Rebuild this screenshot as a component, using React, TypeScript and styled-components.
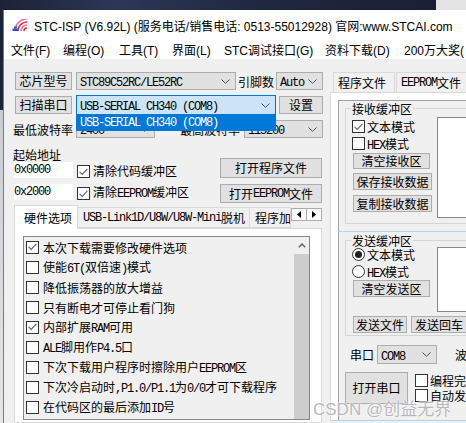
import React from 'react';
import styled, { createGlobalStyle } from 'styled-components';

const GlobalStyle = createGlobalStyle`
  html, body { margin: 0; padding: 0; }
  body {
    width: 466px;
    height: 423px;
    overflow: hidden;
    background: #d9d9d9;
    font-family: "Noto Sans CJK SC", sans-serif;
    font-size: 12px;
    color: #000;
  }
`;

// sim-sun like latin runs: narrow mono
const Lat = styled.span`
    font-family: "Liberation Mono", monospace;
    letter-spacing: -1.2px;
`;

const isLat = (s: string) => /^[\x20-\x7e]+$/.test(s);

function T({ children }: { children: string }) {
    const parts = children.split(/([\x20-\x7e]+)/).filter(Boolean);
    return <>{parts.map((p, i) => isLat(p) ? <Lat key={i}>{p}</Lat> : <span key={i}>{p}</span>)}</>;
}

const Page = styled.div`
    position: relative;
    width: 466px;
    height: 423px;
    overflow: hidden;
    display: flex;
    flex-direction: column;
`;

const Desktop = styled.div`
    height: 10px;
    flex: none;
    background: linear-gradient(to right, #1c2236 0, #2c3656 25%, #202840 55%, #1a2033 93.5%, #e4e4e4 93.5%);
`;

const Screen = styled.div`
    display: flex;
    flex: 1;
    min-height: 0;
`;

const Edge = styled.div`
    width: 3px;
    flex: none;
    background: linear-gradient(#1e2438 0, #1e2438 100px, #c9ccd2 100px, #e6e6e6 100%);
`;

const Window = styled.div`
    flex: 1;
    min-width: 0;
    display: flex;
    flex-direction: column;
    border-left: 1px solid #7b7b7b;
    background: #f0f0f0;
`;

const TitleBar = styled.div`
    height: 30px;
    flex: none;
    background: #fff;
    display: flex;
    align-items: center;
    gap: 6px;
    padding-left: 8px;
    font-family: "Liberation Sans", "Noto Sans CJK SC", sans-serif;
    font-size: 12px;
    white-space: nowrap;
`;

const MenuBar = styled.div`
    height: 19px;
    flex: none;
    box-sizing: border-box;
    padding: 4px 0 0 7px;
    background: #fff;
    display: flex;
    font-family: "Liberation Sans", "Noto Sans CJK SC", sans-serif;
    font-size: 12px;
    line-height: 15px;
    white-space: nowrap;
`;

const MenuItem = styled.span<{ $w?: number }>`
    flex: none;
    width: ${p => (p.$w ? `${p.$w}px` : 'auto')};
`;

const Body = styled.div`
    flex: 1;
    min-height: 0;
    display: flex;
`;

/* ---------- left side ---------- */

const LeftPane = styled.div`
    width: 326px;
    flex: none;
    box-sizing: border-box;
    padding: 13px 0 0 10px;
    display: flex;
    flex-direction: column;
`;

const Row = styled.div<{ $h: number; $mt?: number }>`
    display: flex;
    align-items: center;
    height: ${p => p.$h}px;
    margin-top: ${p => p.$mt ?? 0}px;
    flex: none;
`;

const Button = styled.div<{ $w: number; $h: number; $ml?: number }>`
    width: ${p => p.$w}px;
    height: ${p => p.$h}px;
    margin-left: ${p => p.$ml ?? 0}px;
    flex: none;
    box-sizing: border-box;
    border: 1px solid #adadad;
    background: #e1e1e1;
    display: flex;
    align-items: center;
    justify-content: center;
    white-space: nowrap;
    line-height: 1;
`;

const Label = styled.span<{ $w?: number; $ml?: number }>`
    width: ${p => (p.$w ? `${p.$w}px` : 'auto')};
    margin-left: ${p => p.$ml ?? 0}px;
    flex: none;
    white-space: nowrap;
`;

const ComboBox = styled.div<{ $w: number; $h: number; $ml?: number; $focus?: boolean }>`
    position: relative;
    width: ${p => p.$w}px;
    height: ${p => p.$h}px;
    margin-left: ${p => p.$ml ?? 0}px;
    flex: none;
    box-sizing: border-box;
    border: 1px solid ${p => (p.$focus ? '#0078d7' : '#adadad')};
    background: ${p => (p.$focus ? '#cce4f7' : '#e1e1e1')};
    display: flex;
    align-items: center;
    justify-content: space-between;
    padding: 0 5px 0 3px;
    white-space: nowrap;
`;

const DropList = styled.div`
    position: absolute;
    left: -1px;
    right: -1px;
    top: 100%;
    height: 17px;
    background: #0078d7;
    color: #fff;
    display: flex;
    align-items: center;
    padding-left: 4px;
    z-index: 5;
`;

const Chevron = () => (
    <svg width="9" height="5" viewBox="0 0 9 5">
        <polyline points="0.5,0.5 4.5,4.3 8.5,0.5" fill="none" stroke="#505050" strokeWidth="1" />
    </svg>
);

function Combo({ w, h, ml, text, focus, drop }: { w: number; h: number; ml?: number; text: string; focus?: boolean; drop?: string }) {
    return (
        <ComboBox $w={w} $h={h} $ml={ml} $focus={focus}>
            <span><T>{text}</T></span>
            <Chevron />
            {drop && <DropList><T>{drop}</T></DropList>}
        </ComboBox>
    );
}

const BoxMark = styled.span<{ $round?: boolean }>`
    width: 13px;
    height: 13px;
    flex: none;
    box-sizing: border-box;
    border: 1px solid #333;
    border-radius: ${p => (p.$round ? '50%' : '0')};
    background: #fff;
    display: inline-flex;
    align-items: center;
    justify-content: center;
`;

const Dot = styled.span`
    width: 7px;
    height: 7px;
    border-radius: 50%;
    background: #222;
`;

function Check({ on }: { on?: boolean }) {
    return (
        <BoxMark>
            {on && (
                <svg width="9" height="8" viewBox="0 0 9 8">
                    <polyline points="0.6,3.8 3.2,6.4 8.4,0.9" fill="none" stroke="#666" strokeWidth="1.2" />
                </svg>
            )}
        </BoxMark>
    );
}

function Radio({ on }: { on?: boolean }) {
    return <BoxMark $round>{on && <Dot />}</BoxMark>;
}

const AddrBlock = styled.div`
    display: flex;
    margin-top: 9px;
    flex: none;
`;

const AddrLeft = styled.div`
    width: 206px;
    display: flex;
    flex-direction: column;
`;

const AddrRight = styled.div`
    display: flex;
    flex-direction: column;
    padding-top: 11px;
    gap: 6px;
`;

const AddrLabel = styled.div`
    height: 15px;
    line-height: 15px;
    margin-left: -1px;
`;

const AddrInput = styled.div`
    width: 59px;
    height: 16px;
    flex: none;
    background: #fff;
    display: flex;
    align-items: center;
`;

const CheckText = styled.span<{ $ml?: number }>`
    margin-left: ${p => p.$ml ?? 3}px;
    white-space: nowrap;
`;

const TabStrip = styled.div`
    display: flex;
    align-items: flex-end;
    height: 23px;
    margin-top: 2px;
    flex: none;
    position: relative;
    z-index: 1;
`;

const Tab = styled.div<{ $w: number; $active?: boolean }>`
    width: ${p => p.$w}px;
    height: ${p => (p.$active ? 24 : 21)}px;
    margin-bottom: ${p => (p.$active ? -1 : 0)}px;
    margin-right: -1px;
    flex: none;
    box-sizing: border-box;
    border: 1px solid #d9d9d9;
    border-bottom: ${p => (p.$active ? 'none' : '1px solid #d9d9d9')};
    background: ${p => (p.$active ? '#fff' : '#f0f0f0')};
    display: flex;
    align-items: center;
    padding-left: ${p => (p.$active ? 9 : 5)}px;
    padding-bottom: ${p => (p.$active ? 1 : 0)}px;
    overflow: hidden;
    white-space: nowrap;
`;

const TabArrows = styled.div`
    display: flex;
    align-self: flex-start;
    margin-top: 3px;
    margin-left: 1px;
`;

const ArrowBtn = styled.div`
    width: 16px;
    height: 13px;
    box-sizing: border-box;
    border: 1px solid #adadad;
    background: #fafafa;
    display: flex;
    align-items: center;
    justify-content: center;
    & + & { margin-left: -1px; }
`;

const TabPanel = styled.div`
    width: 308px;
    flex: 1;
    box-sizing: border-box;
    border: 1px solid #d9d9d9;
    background: #fff;
    padding: 7px 11px 0 8px;
`;

const ListBox = styled.div`
    height: 184px;
    box-sizing: border-box;
    border: 1px solid #828790;
    background: #f0f0f0;
    display: flex;
`;

const ListItems = styled.div`
    flex: 1;
    display: flex;
    flex-direction: column;
`;

const ListItem = styled.div`
    height: 20px;
    display: flex;
    align-items: center;
    padding-left: 2px;
    gap: 4px;
    white-space: nowrap;
`;

const ScrollBar = styled.div`
    width: 15px;
    display: flex;
    flex-direction: column;
    background: #f0f0f0;
`;

const ScrollUp = styled.div`
    height: 17px;
    display: flex;
    align-items: center;
    justify-content: center;
`;

const Thumb = styled.div`
    flex: 1;
    background: #cdcdcd;
`;

/* ---------- right side ---------- */

const RightPane = styled.div`
    flex: 1;
    min-width: 0;
    display: flex;
    flex-direction: column;
    padding-top: 13px;
`;

const RightTabs = styled.div`
    display: flex;
    height: 20px;
    padding-left: 3px;
    flex: none;
`;

const RTab = styled.div<{ $w: number }>`
    width: ${p => p.$w}px;
    flex: none;
    box-sizing: border-box;
    border: 1px solid #d9d9d9;
    border-bottom: none;
    background: #f0f0f0;
    display: flex;
    align-items: center;
    padding-left: 4px;
    white-space: nowrap;
    & + & { margin-left: 1px; }
`;

const RightPanel = styled.div`
    flex: 1;
    min-height: 0;
    display: flex;
    border-left: 1px solid #d9d9d9;
    border-top: 1px solid #d9d9d9;
    border-bottom: 1px solid #b3d3ef;
    margin-bottom: 2px;
    background: #fff;
    padding: 7px 0 0 7px;
`;

const InnerPanel = styled.div`
    flex: 1;
    min-width: 0;
    display: flex;
    flex-direction: column;
    border-left: 1px solid #a0a0a0;
    border-top: 1px solid #a0a0a0;
    background: #f0f0f0;
    padding-left: 6px;
`;

const Group = styled.fieldset<{ $mt?: number; $pb: number }>`
    margin: ${p => p.$mt ?? 0}px 0 0 0;
    padding: 0 0 ${p => p.$pb}px 5px;
    border: 1px solid #d5d5d5;
    border-right: none;
    min-width: 0;
    flex: none;
`;

const Legend = styled.legend`
    padding: 0 1px;
    line-height: 15px;
    font-size: 12px;
`;

const GroupBody = styled.div`
    display: flex;
`;

const GroupCol = styled.div`
    width: 86px;
    flex: none;
    display: flex;
    flex-direction: column;
    padding-left: 1px;
    box-sizing: border-box;
`;

const OptRow = styled.div<{ $h: number; $mt?: number }>`
    height: ${p => p.$h}px;
    margin-top: ${p => p.$mt ?? 0}px;
    display: flex;
    align-items: center;
    white-space: nowrap;
`;

const TextArea = styled.div<{ $h: number; $mt: number }>`
    flex: 1;
    height: ${p => p.$h}px;
    margin-top: ${p => p.$mt}px;
    box-sizing: border-box;
    border: 1px solid #828790;
    border-right: none;
    background: #fff;
`;

const Splitter = styled.div`
    height: 1px;
    margin: 7px 0 0 -7px;
    background: #b3d3ef;
    flex: none;
`;

const ButtonRow = styled.div`
    display: flex;
    margin-top: 4px;
`;

const SerialRow = styled.div`
    display: flex;
    align-items: center;
    height: 19px;
    margin-top: 9px;
    white-space: nowrap;
`;

const BottomRow = styled.div`
    display: flex;
    margin-top: 8px;
`;

const CheckCol = styled.div`
    display: flex;
    flex-direction: column;
    margin: 1px 0 0 7px;
`;

const Watermark = styled.div`
    position: absolute;
    left: 313px;
    top: 395px;
    font-family: "Liberation Sans", "Noto Sans CJK SC", sans-serif;
    font-size: 17px;
    color: rgba(165, 165, 165, 0.8);
    text-shadow: 0 0 2px #fff, 0 0 1px #fff;
    white-space: nowrap;
    z-index: 10;
`;

const Logo = () => (
    <svg width="16" height="13" viewBox="0 0 16 13">
        {[3, 6, 9, 12].map((r, i) => (
            <path key={r} d={`M ${15 - r} 12 A ${r} ${r} 0 0 1 15 ${12 - r}`} fill="none" stroke={i % 2 ? '#f26d8e' : '#e2304d'} strokeWidth="1.6" />
        ))}
        <rect x="0.5" y="9.5" width="6" height="2.5" fill="#2a4fd0" />
        <rect x="2" y="7.5" width="3" height="1.6" fill="#2a4fd0" />
    </svg>
);

const TriLeft = () => <svg width="4" height="7" viewBox="0 0 4 7"><polygon points="4,0 0,3.5 4,7" fill="#000" /></svg>;
const TriRight = () => <svg width="4" height="7" viewBox="0 0 4 7"><polygon points="0,0 4,3.5 0,7" fill="#000" /></svg>;

const hwOptions: [string, boolean][] = [
    ['本次下载需要修改硬件选项', true],
    ['使能6T(双倍速)模式', false],
    ['降低振荡器的放大增益', false],
    ['只有断电才可停止看门狗', false],
    ['内部扩展RAM可用', true],
    ['ALE脚用作P4.5口', false],
    ['下次下载用户程序时擦除用户EEPROM区', false],
    ['下次冷启动时,P1.0/P1.1为0/0才可下载程序', false],
    ['在代码区的最后添加ID号', false],
];

const menus: [string, number?][] = [
    ['文件(F)', 52],
    ['编程(O)', 56],
    ['工具(T)', 53],
    ['界面(L)', 52],
    ['STC调试接口(G)', 101],
    ['资料下载(D)', 79],
    ['200万大奖(', undefined],
];

function App() {
    return (
        <Page>
            <GlobalStyle />
            <Desktop />
            <Screen>
                <Edge />
                <Window>
                    <TitleBar>
                        <Logo />
                        <span>STC-ISP (V6.92L) (服务电话/销售电话: 0513-55012928) 官网:www.STCAI.com</span>
                    </TitleBar>
                    <MenuBar>
                        {menus.map(([m, w]) => <MenuItem key={m} $w={w}>{m}</MenuItem>)}
                    </MenuBar>
                    <Body>
                        <LeftPane>
                            <Row $h={18}>
                                <Button $w={57} $h={18} $ml={1}>芯片型号</Button>
                                <Combo w={160} h={18} ml={4} text="STC89C52RC/LE52RC" />
                                <Label $w={38} $ml={2}>引脚数</Label>
                                <Combo w={47} h={18} text="Auto" />
                            </Row>
                            <Row $h={20} $mt={5}>
                                <Button $w={57} $h={18} $ml={1}>扫描串口</Button>
                                <Combo w={200} h={20} ml={4} text="USB-SERIAL CH340 (COM8)" focus drop="USB-SERIAL CH340 (COM8)" />
                                <Button $w={44} $h={18} $ml={3}>设置</Button>
                            </Row>
                            <Row $h={18} $mt={5}>
                                <Label $w={63} $ml={-1}>最低波特率</Label>
                                <Combo w={79} h={18} text="2400" />
                                <Label $w={64} $ml={25}>最高波特率</Label>
                                <Combo w={79} h={18} text="115200" />
                            </Row>
                            <AddrBlock>
                                <AddrLeft>
                                    <AddrLabel>起始地址</AddrLabel>
                                    <Row $h={16}>
                                        <AddrInput><T>0x0000</T></AddrInput>
                                        <Label $ml={4}><Check on /></Label>
                                        <CheckText><T>清除代码缓冲区</T></CheckText>
                                    </Row>
                                    <Row $h={16} $mt={6}>
                                        <AddrInput><T>0x2000</T></AddrInput>
                                        <Label $ml={4}><Check on /></Label>
                                        <CheckText><T>清除EEPROM缓冲区</T></CheckText>
                                    </Row>
                                </AddrLeft>
                                <AddrRight>
                                    <Button $w={102} $h={20}>打开程序文件</Button>
                                    <Button $w={102} $h={19}><T>打开EEPROM文件</T></Button>
                                </AddrRight>
                            </AddrBlock>
                            <TabStrip>
                                <Tab $w={64} $active>硬件选项</Tab>
                                <Tab $w={173}><T>USB-Link1D/U8W/U8W-Mini脱机</T></Tab>
                                <Tab $w={42}>程序加载</Tab>
                                <TabArrows>
                                    <ArrowBtn><TriLeft /></ArrowBtn>
                                    <ArrowBtn><TriRight /></ArrowBtn>
                                </TabArrows>
                            </TabStrip>
                            <TabPanel>
                                <ListBox>
                                    <ListItems>
                                        {hwOptions.map(([t, on]) => (
                                            <ListItem key={t}>
                                                <Check on={on} />
                                                <span><T>{t}</T></span>
                                            </ListItem>
                                        ))}
                                    </ListItems>
                                    <ScrollBar>
                                        <ScrollUp>
                                            <svg width="8" height="5" viewBox="0 0 8 5">
                                                <polyline points="0.8,4.3 4,1 7.2,4.3" fill="none" stroke="#606060" strokeWidth="1.4" />
                                            </svg>
                                        </ScrollUp>
                                        <Thumb />
                                    </ScrollBar>
                                </ListBox>
                            </TabPanel>
                        </LeftPane>

                        <RightPane>
                            <RightTabs>
                                <RTab $w={62}>程序文件</RTab>
                                <RTab $w={80}><T>EEPROM文件</T></RTab>
                            </RightTabs>
                            <RightPanel>
                                <InnerPanel>
                                    <Group $pb={5}>
                                        <Legend>接收缓冲区</Legend>
                                        <GroupBody>
                                            <GroupCol>
                                                <OptRow $h={17} $mt={2}><Check on /><CheckText $ml={2}>文本模式</CheckText></OptRow>
                                                <OptRow $h={17}><Check /><CheckText $ml={2}><T>HEX模式</T></CheckText></OptRow>
                                                <Button $w={77} $h={16} $ml={1} style={{ marginTop: 1 }}>清空接收区</Button>
                                                <Button $w={79} $h={17} $ml={1} style={{ marginTop: 4 }}>保存接收数据</Button>
                                                <Button $w={79} $h={17} $ml={1} style={{ marginTop: 5 }}>复制接收数据</Button>
                                            </GroupCol>
                                            <TextArea $h={101} $mt={1} />
                                        </GroupBody>
                                    </Group>
                                    <Splitter />
                                    <Group $pb={2} $mt={1}>
                                        <Legend>发送缓冲区</Legend>
                                        <GroupBody>
                                            <GroupCol>
                                                <OptRow $h={13}><Radio on /><CheckText $ml={2}>文本模式</CheckText></OptRow>
                                                <OptRow $h={13} $mt={4}><Radio /><CheckText $ml={2}><T>HEX模式</T></CheckText></OptRow>
                                                <Button $w={77} $h={17} $ml={1} style={{ marginTop: 2 }}>清空发送区</Button>
                                            </GroupCol>
                                            <TextArea $h={65} $mt={-1} />
                                        </GroupBody>
                                        <ButtonRow>
                                            <Button $w={54} $h={17} $ml={2}>发送文件</Button>
                                            <Button $w={56} $h={17} $ml={4}>发送回车</Button>
                                        </ButtonRow>
                                    </Group>
                                    <SerialRow>
                                        <Label $w={27} $ml={5}>串口</Label>
                                        <Combo w={60} h={19} text="COM8" />
                                        <Label $ml={18}>波</Label>
                                    </SerialRow>
                                    <BottomRow>
                                        <Button $w={63} $h={32}>打开串口</Button>
                                        <CheckCol>
                                            <OptRow $h={15}><Check /><CheckText $ml={2}>编程完</CheckText></OptRow>
                                            <OptRow $h={15}><Check /><CheckText $ml={2}>自动发</CheckText></OptRow>
                                        </CheckCol>
                                    </BottomRow>
                                </InnerPanel>
                            </RightPanel>
                        </RightPane>
                    </Body>
                </Window>
            </Screen>
            <Watermark>CSDN @创益无界</Watermark>
        </Page>
    );
}

export default App;
